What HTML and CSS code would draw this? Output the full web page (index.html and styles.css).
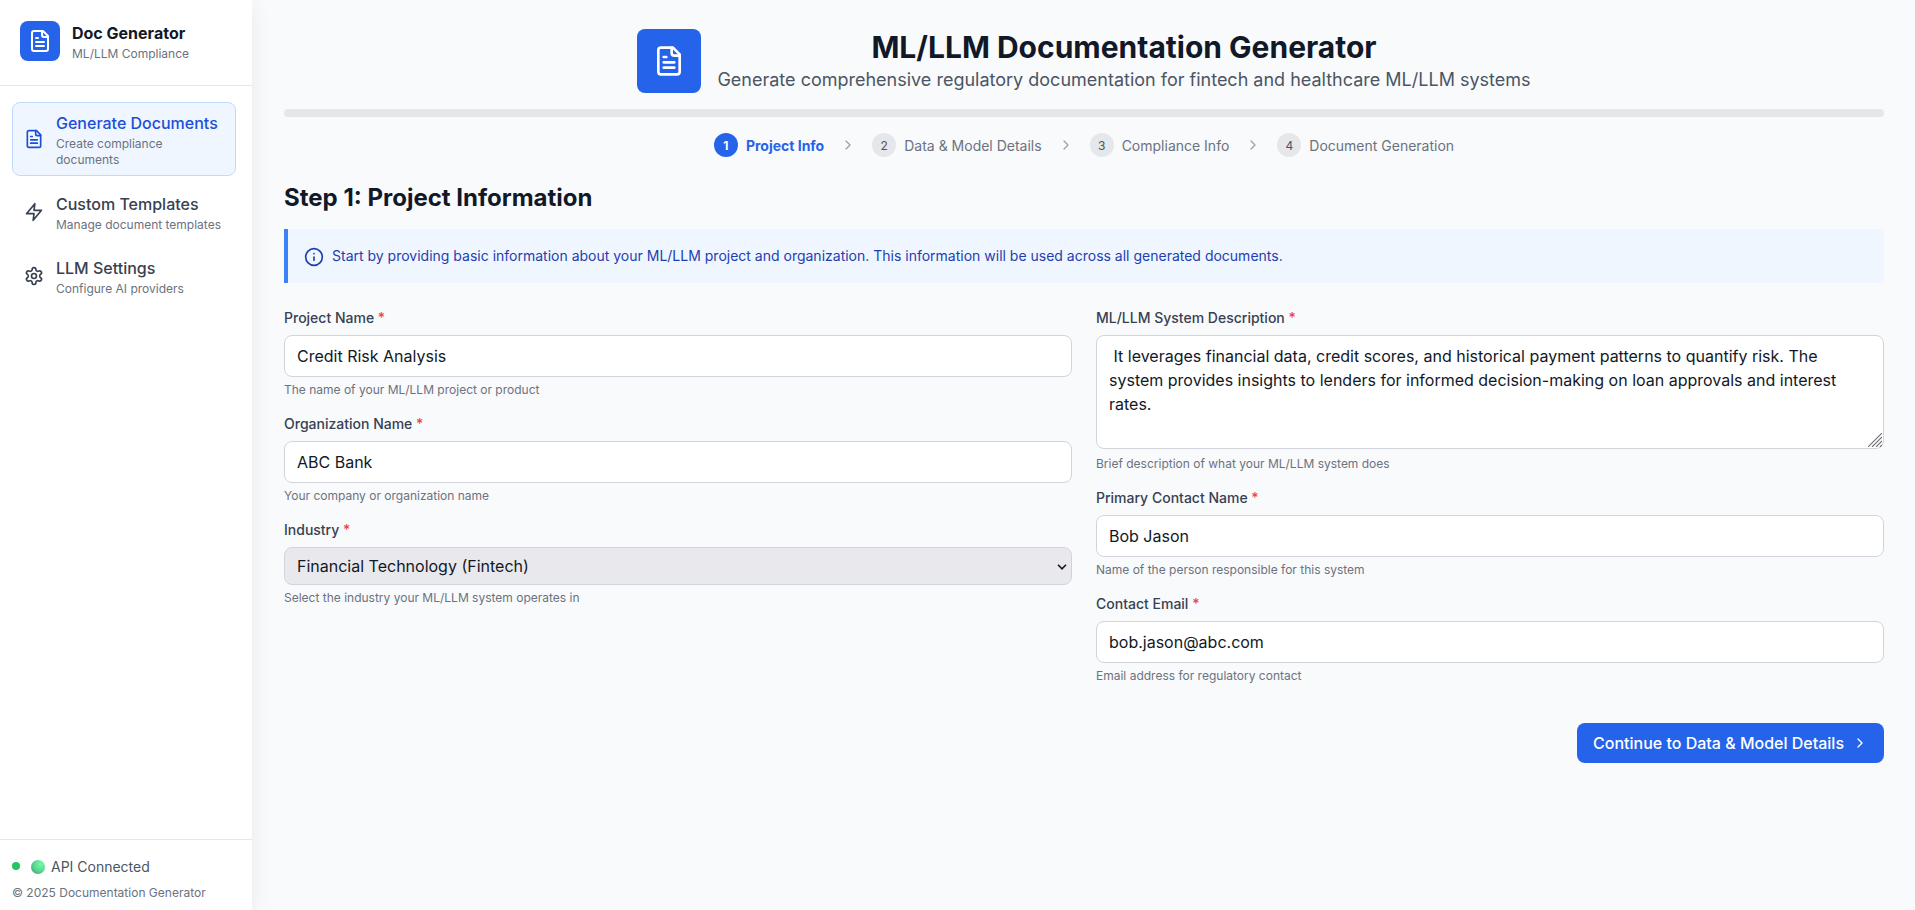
FILE: index.html
```html
<!DOCTYPE html>
<html lang="en">
<head>
<meta charset="utf-8">
<title>Doc Generator</title>
<link rel="stylesheet" href="styles.css">
</head>
<body>
<svg class="defs" aria-hidden="true">
  <symbol id="file" viewBox="0 0 24 24"><path d="M15 2H6a2 2 0 0 0-2 2v16a2 2 0 0 0 2 2h12a2 2 0 0 0 2-2V7z"/><path d="M14 2v4a2 2 0 0 0 2 2h4M16 13H8M16 17H8M10 9H8"/></symbol>
  <symbol id="chevron" viewBox="0 0 24 24"><path d="M9 18l6-6-6-6"/></symbol>
</svg>
<div class="app">
  <aside class="sidebar">
    <div class="brand">
      <div class="brand-icon"><svg class="icon i24"><use href="#file"/></svg></div>
      <div>
        <div class="brand-title">Doc Generator</div>
        <div class="brand-sub">ML/LLM Compliance</div>
      </div>
    </div>
    <nav class="nav">
      <a class="nav-item active">
        <svg class="icon i20"><use href="#file"/></svg>
        <span class="nav-text"><span class="nav-title">Generate Documents</span><span class="nav-sub">Create compliance documents</span></span>
      </a>
      <a class="nav-item">
        <svg class="icon i20" viewBox="0 0 24 24"><path d="M13 2L3 14h9l-1 8 10-12h-9z"/></svg>
        <span class="nav-text"><span class="nav-title">Custom Templates</span><span class="nav-sub">Manage document templates</span></span>
      </a>
      <a class="nav-item">
        <svg class="icon i20" viewBox="0 0 24 24"><path d="M12.22 2h-.44a2 2 0 0 0-2 2v.18a2 2 0 0 1-1 1.73l-.43.25a2 2 0 0 1-2 0l-.15-.08a2 2 0 0 0-2.73.73l-.22.38a2 2 0 0 0 .73 2.73l.15.1a2 2 0 0 1 1 1.72v.51a2 2 0 0 1-1 1.74l-.15.09a2 2 0 0 0-.73 2.73l.22.38a2 2 0 0 0 2.73.73l.15-.08a2 2 0 0 1 2 0l.43.25a2 2 0 0 1 1 1.73V20a2 2 0 0 0 2 2h.44a2 2 0 0 0 2-2v-.18a2 2 0 0 1 1-1.73l.43-.25a2 2 0 0 1 2 0l.15.08a2 2 0 0 0 2.73-.73l.22-.39a2 2 0 0 0-.73-2.73l-.15-.08a2 2 0 0 1-1-1.74v-.5a2 2 0 0 1 1-1.74l.15-.09a2 2 0 0 0 .73-2.73l-.22-.38a2 2 0 0 0-2.73-.73l-.15.08a2 2 0 0 1-2 0l-.43-.25a2 2 0 0 1-1-1.73V4a2 2 0 0 0-2-2z"/><circle cx="12" cy="12" r="3"/></svg>
        <span class="nav-text"><span class="nav-title">LLM Settings</span><span class="nav-sub">Configure AI providers</span></span>
      </a>
    </nav>
    <div class="side-foot">
      <div class="status"><span class="dot"></span><span class="ball"></span><span class="status-text">API Connected</span></div>
      <div class="copy">© 2025 Documentation Generator</div>
    </div>
  </aside>
  <main class="main">
    <header class="header">
      <div class="header-icon"><svg class="icon i32"><use href="#file"/></svg></div>
      <div class="header-text">
        <h1>ML/LLM Documentation Generator</h1>
        <p>Generate comprehensive regulatory documentation for fintech and healthcare ML/LLM systems</p>
      </div>
    </header>
    <div class="progress"></div>
    <div class="steps">
      <div class="step current"><span class="num">1</span><span class="step-name">Project Info</span></div>
      <svg class="icon i16 sep"><use href="#chevron"/></svg>
      <div class="step"><span class="num">2</span><span class="step-name">Data &amp; Model Details</span></div>
      <svg class="icon i16 sep"><use href="#chevron"/></svg>
      <div class="step"><span class="num">3</span><span class="step-name">Compliance Info</span></div>
      <svg class="icon i16 sep"><use href="#chevron"/></svg>
      <div class="step"><span class="num">4</span><span class="step-name">Document Generation</span></div>
    </div>
    <h2>Step 1: Project Information</h2>
    <div class="info">
      <svg class="icon i20" viewBox="0 0 24 24"><circle cx="12" cy="12" r="10"/><path d="M12 16v-4M12 8h.01"/></svg>
      <p>Start by providing basic information about your ML/LLM project and organization. This information will be used across all generated documents.</p>
    </div>
    <form class="form">
      <div class="col">
        <div class="field"><label>Project Name <b>*</b></label><input class="control" type="text" value="Credit Risk Analysis"><p class="help">The name of your ML/LLM project or product</p></div>
        <div class="field"><label>Organization Name <b>*</b></label><input class="control" type="text" value="ABC Bank"><p class="help">Your company or organization name</p></div>
        <div class="field"><label>Industry <b>*</b></label><div class="wrap"><select class="control select"><option>Financial Technology (Fintech)</option></select><svg class="arrow" viewBox="0 0 10 6"><path d="M1 .8l4 4 4-4"/></svg></div><p class="help">Select the industry your ML/LLM system operates in</p></div>
      </div>
      <div class="col">
        <div class="field"><label>ML/LLM System Description <b>*</b></label><div class="wrap area-wrap"><textarea class="control area" spellcheck="false"> It leverages financial data, credit scores, and historical payment patterns to quantify risk. The system provides insights to lenders for informed decision-making on loan approvals and interest rates.</textarea><svg class="grip" viewBox="0 0 14 14"><path d="M0 14L14 0M4 14L14 4M8 14l6-6M12 14l2-2"/></svg></div><p class="help">Brief description of what your ML/LLM system does</p></div>
        <div class="field"><label>Primary Contact Name <b>*</b></label><input class="control" type="text" value="Bob Jason"><p class="help">Name of the person responsible for this system</p></div>
        <div class="field"><label>Contact Email <b>*</b></label><input class="control" type="email" value="bob.jason@abc.com"><p class="help">Email address for regulatory contact</p></div>
      </div>
    </form>
    <div class="actions"><button class="next" type="button">Continue to Data &amp; Model Details<svg class="icon i16"><use href="#chevron"/></svg></button></div>
  </main>
</div>
</body>
</html>
```
FILE: styles.css
```css
* { box-sizing: border-box; margin: 0; padding: 0; }
body { font-family: Inter, "Liberation Sans", sans-serif; font-size: 16px; line-height: 24px; color: #111827; background: #f9fafc; }
.defs { position: absolute; width: 0; height: 0; }
.icon { display: block; flex: none; fill: none; stroke: currentColor; stroke-width: 2; stroke-linecap: round; stroke-linejoin: round; }
.i16 { width: 16px; height: 16px; }
.i20 { width: 20px; height: 20px; }
.i24 { width: 24px; height: 24px; }
.i32 { width: 32px; height: 32px; }
.app { display: flex; height: 910px; overflow: hidden; }

.sidebar { width: 252px; flex: none; display: flex; flex-direction: column; background: #fff; box-shadow: 0 4px 20px rgba(0,0,0,.07); }
.brand { display: flex; gap: 12px; height: 86px; padding: 21px 20px 0; border-bottom: 1px solid #e5e7eb; }
.brand-icon { width: 40px; height: 40px; display: flex; align-items: center; justify-content: center; background: #2563eb; color: #fff; border-radius: 8px; }
.brand-title { font-weight: 700; line-height: 24px; }
.brand-sub { padding-top: 1px; font-size: 12px; line-height: 16px; color: #6b7280; }
.nav { flex: 1; display: flex; flex-direction: column; gap: 8px; padding: 16px 16px 0 12px; }
.nav-item { display: flex; align-items: center; gap: 12px; padding: 8px 12px; border-radius: 8px; color: #374151; }
.nav-item.active { padding: 8px 11px; background: #eff6ff; border: 1px solid #bfdbfe; color: #1d4ed8; }
.nav-title { display: block; font-weight: 500; line-height: 24px; }
.nav-sub { display: block; padding-top: 1px; margin-bottom: -1px; font-size: 12px; line-height: 16px; color: #6b7280; }
.side-foot { height: 71px; padding: 16px 12px 0; border-top: 1px solid #e5e7eb; }
.status { display: flex; align-items: center; height: 20px; font-size: 14px; line-height: 20px; color: #4b5563; }
.status-text { padding-top: 2px; }
.dot { width: 8px; height: 8px; margin-right: 11px; border-radius: 50%; background: #22c55e; }
.ball { width: 14px; height: 14px; margin: 2px 6px 0 0; border-radius: 50%; background: radial-gradient(circle at 70% 30%, #74fba4, #58d890 50%, #468f83 95%); }
.copy { margin-top: 9px; font-size: 12px; line-height: 16px; color: #6b7280; }

.main { flex: 1; padding: 29px 31px 0 32px; }
.header { display: flex; justify-content: center; gap: 16px; height: 64px; }
.header-icon { width: 64px; height: 64px; display: flex; align-items: center; justify-content: center; background: #2563eb; color: #fff; border-radius: 8px; }
.header-text { text-align: center; }
h1 { font-size: 30px; line-height: 36px; font-weight: 700; }
.header-text p { padding-top: 1px; font-size: 18px; line-height: 28px; color: #4b5563; }
.progress { height: 8px; margin-top: 16px; border-radius: 4px; background: #e5e7eb; }
.steps { display: flex; align-items: center; justify-content: center; gap: 16px; height: 24px; margin-top: 16px; font-size: 14px; color: #6b7280; }
.step { display: flex; align-items: center; gap: 8px; height: 24px; }
.step-name { padding-top: 2px; }
.num { width: 24px; height: 24px; padding-top: 1px; border-radius: 50%; background: #e5e7eb; color: #4b5563; font-size: 12px; line-height: 23px; text-align: center; }
.current { color: #2563eb; font-weight: 700; }
.current .num { background: #2563eb; color: #fff; }
.sep { color: #9ca3af; }
h2 { margin-top: 25px; font-size: 24px; line-height: 32px; font-weight: 700; }
.info { display: flex; gap: 8px; height: 54px; margin-top: 15px; padding: 16px; border-left: 4px solid #3b82f6; background: #eff6ff; color: #1e40af; font-size: 14px; line-height: 22px; }
.info .icon { margin-top: 2px; }
.form { display: grid; grid-template-columns: 1fr 1fr; gap: 24px; margin-top: 24px; }
.col { display: flex; flex-direction: column; gap: 16px; }
label { display: block; padding-top: 1px; margin-bottom: 7px; font-size: 14px; line-height: 20px; font-weight: 500; color: #374151; }
label b { font-weight: 500; color: #ef4444; }
.control { display: block; width: 100%; height: 42px; padding: 8px 12px; border: 1px solid #d1d5db; border-radius: 8px; background: #fff; font: inherit; color: #111827; }
.wrap { position: relative; }
.select { height: 38px; padding: 6px 12px 8px; background: #e9e9ed; appearance: none; }
.arrow { position: absolute; right: 5px; top: 17px; width: 10px; height: 6px; fill: none; stroke: #111827; stroke-width: 1.6; }
.area-wrap { padding-bottom: 2px; }
.area { height: 114px; resize: none; }
.grip { position: absolute; right: 2px; top: 98px; width: 14px; height: 14px; fill: none; stroke: #6f6f75; stroke-width: 1.1; }
.help { margin-top: 5px; margin-bottom: -1px; font-size: 12px; line-height: 16px; color: #6b7280; }
.actions { display: flex; justify-content: flex-end; margin-top: 40px; }
.next { display: flex; align-items: center; gap: 8px; height: 40px; padding: 0 16px; border: 0; border-radius: 8px; background: #2563eb; color: #fff; font: inherit; font-weight: 500; }
```
